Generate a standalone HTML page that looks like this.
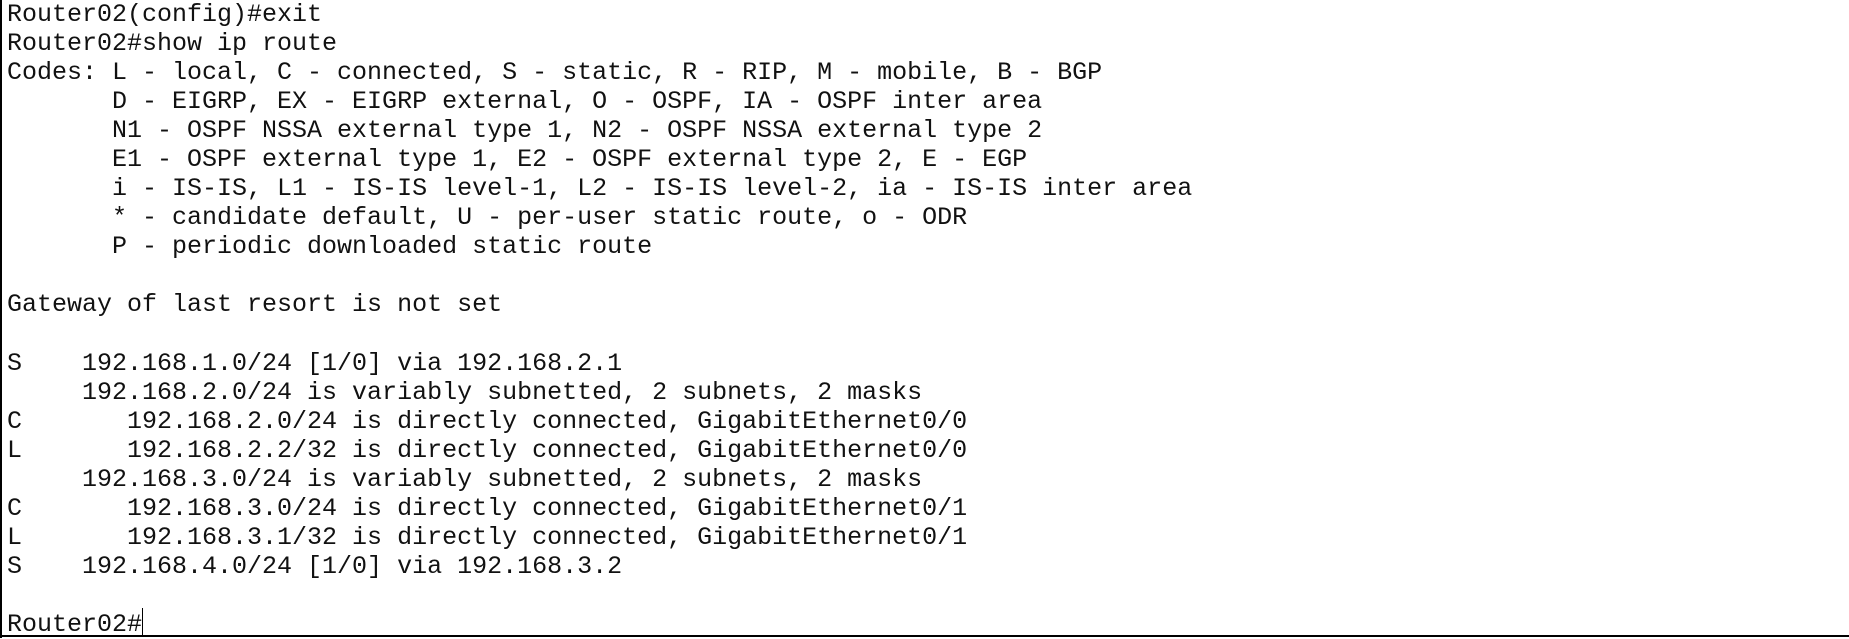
<!DOCTYPE html>
<html><head><meta charset="utf-8"><style>
html,body{margin:0;padding:0;background:#fff;}
body{width:1849px;height:638px;position:relative;overflow:hidden;}
.b{position:absolute;left:0;top:0;width:2px;height:638px;background:#000;}
.bb{position:absolute;left:0;top:635px;width:1849px;height:2px;background:#000;}
pre{position:absolute;left:7px;top:0;margin:0;font-family:"Liberation Mono",monospace;font-size:25px;line-height:29.05px;color:#111;}
.cur{position:absolute;left:142px;top:608px;width:1px;height:28px;background:#000;}
</style></head><body>
<div class="b"></div><div class="bb"></div>
<pre>Router02(config)#exit
Router02#show ip route
Codes: L - local, C - connected, S - static, R - RIP, M - mobile, B - BGP
       D - EIGRP, EX - EIGRP external, O - OSPF, IA - OSPF inter area
       N1 - OSPF NSSA external type 1, N2 - OSPF NSSA external type 2
       E1 - OSPF external type 1, E2 - OSPF external type 2, E - EGP
       i - IS-IS, L1 - IS-IS level-1, L2 - IS-IS level-2, ia - IS-IS inter area
       * - candidate default, U - per-user static route, o - ODR
       P - periodic downloaded static route

Gateway of last resort is not set

S    192.168.1.0/24 [1/0] via 192.168.2.1
     192.168.2.0/24 is variably subnetted, 2 subnets, 2 masks
C       192.168.2.0/24 is directly connected, GigabitEthernet0/0
L       192.168.2.2/32 is directly connected, GigabitEthernet0/0
     192.168.3.0/24 is variably subnetted, 2 subnets, 2 masks
C       192.168.3.0/24 is directly connected, GigabitEthernet0/1
L       192.168.3.1/32 is directly connected, GigabitEthernet0/1
S    192.168.4.0/24 [1/0] via 192.168.3.2

Router02#</pre>
<div class="cur"></div>
</body></html>
